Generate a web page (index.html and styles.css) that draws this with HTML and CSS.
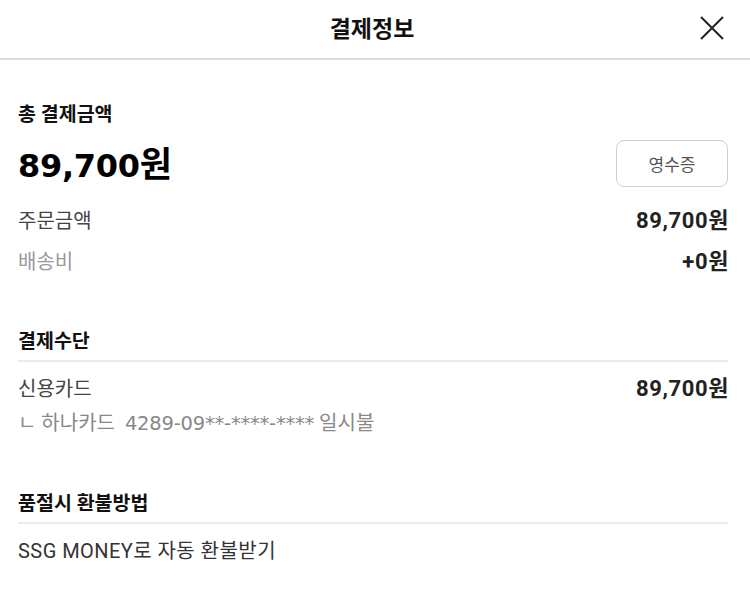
FILE: index.html
```html
<!DOCTYPE html>
<html lang="ko">
<head>
<meta charset="utf-8">
<link rel="stylesheet" href="styles.css">
</head>
<body>
<div class="page">
  <header class="header">
    <h1 class="title">결제정보</h1>
    <button class="close" aria-label="닫기">
      <svg width="24" height="24" viewBox="0 0 24 24"><path d="M1 1 L23 23 M23 1 L1 23" stroke="#222" stroke-width="2" fill="none"/></svg>
    </button>
  </header>
  <main class="content">
    <section class="total">
      <h2 class="sec-title">총 결제금액</h2>
      <div class="total-row">
        <div class="total-amount"><span class="big-num">89,700</span>원</div>
        <button class="receipt">영수증</button>
      </div>
      <div class="row">
        <span class="label">주문금액</span>
        <span class="value">89,700원</span>
      </div>
      <div class="row">
        <span class="label light">배송비</span>
        <span class="value">+0원</span>
      </div>
    </section>
    <section class="block">
      <h2 class="sec-title ruled">결제수단</h2>
      <div class="row first">
        <span class="label">신용카드</span>
        <span class="value">89,700원</span>
      </div>
      <div class="sub">ㄴ 하나카드&nbsp;&nbsp;<span class="card-num">4289-09**-****-****</span> 일시불</div>
    </section>
    <section class="block">
      <h2 class="sec-title ruled">품절시 환불방법</h2>
      <div class="row first">
        <span class="label wide">SSG MONEY로 자동 환불받기</span>
      </div>
    </section>
  </main>
</div>
</body>
</html>
```
FILE: styles.css
```css
* { box-sizing: border-box; }
html, body { margin: 0; padding: 0; background: #fff; }
body {
  font-family: Roboto, "Noto Sans CJK KR", sans-serif;
  color: #222;
}
.header {
  height: 60px;
  border-bottom: 2px solid #dcdcdc;
  display: flex;
  align-items: center;
  justify-content: center;
  position: relative;
}
.title {
  margin: 0 6px 0 0;
  font-size: 23px;
  font-weight: 700;
  color: #111;
  line-height: 1;
  padding-top: 1px;
}
.close {
  position: absolute;
  right: 26px;
  top: 16px;
  width: 24px;
  height: 24px;
  padding: 0;
  border: 0;
  background: none;
  display: flex;
}
.content {
  padding: 43px 22px 0 18px;
}
.sec-title {
  margin: 0;
  font-size: 19.5px;
  font-weight: 700;
  line-height: 24px;
  color: #111;
}
.sec-title.ruled {
  padding-bottom: 6px;
  border-bottom: 2px solid #ebebeb;
}
.total-row {
  margin-top: 13px;
  display: flex;
  align-items: center;
  justify-content: space-between;
}
.total-amount {
  font-size: 35px;
  font-weight: 700;
  color: #000;
  line-height: 42px;
  padding-top: 5px;
}
.big-num {
  font-family: "DejaVu Sans", sans-serif;
  font-size: 32px;
  letter-spacing: -0.3px;
}
.receipt {
  width: 112px;
  height: 47px;
  border: 1px solid #cfcfcf;
  border-radius: 8px;
  background: #fff;
  font-family: inherit;
  font-size: 17px;
  color: #555;
  padding: 0;
}
.row {
  display: flex;
  justify-content: space-between;
  align-items: center;
  line-height: 24px;
  margin-top: 17px;
}
.total-row + .row { margin-top: 22px; }
.row.first { margin-top: 15px; }
.label {
  font-size: 20px;
  color: #444;
}
.label.light { color: #999; }
.label.wide { color: #333; letter-spacing: 0.45px; }
.value {
  font-size: 22px;
  font-weight: 700;
  color: #222;
  letter-spacing: 0.6px;
  margin-right: -1px;
}
.sub {
  margin-top: 10px;
  line-height: 24px;
  font-size: 20px;
  color: #888;
}
.card-num {
  font-family: "DejaVu Sans", sans-serif;
  font-size: 19.5px;
  letter-spacing: -0.2px;
}
.block { margin-top: 56px; }
```
